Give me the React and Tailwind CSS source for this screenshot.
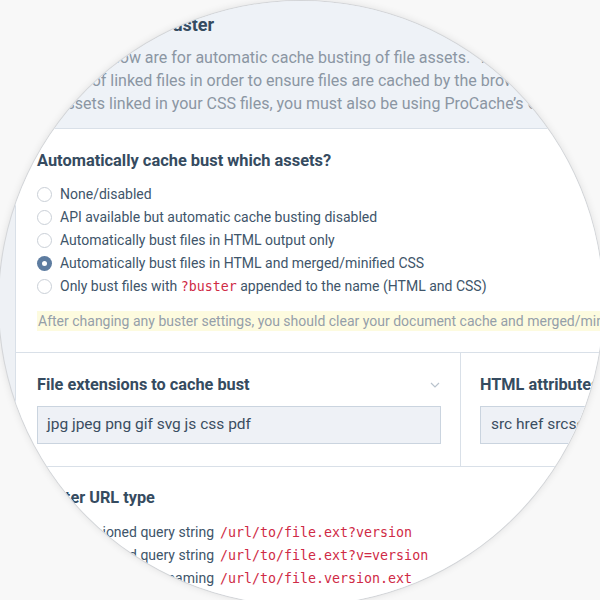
import React from 'react';
import { RefreshCw } from 'lucide-react';

const sans = { fontFamily: 'Roboto, "Noto Sans", sans-serif' };
const mono = { fontFamily: '"DejaVu Sans Mono", "Liberation Mono", monospace' };

function Radio({ checked }) {
  return checked ? (
    <span className="w-[15px] h-[15px] rounded-full bg-[#5d7ca0] flex items-center justify-center shrink-0">
      <span className="w-[5px] h-[5px] rounded-full bg-white" />
    </span>
  ) : (
    <span className="w-[15px] h-[15px] rounded-full border border-[#c9cfd6] bg-white shrink-0" />
  );
}

const assetOptions = [
  { label: 'None/disabled' },
  { label: 'API available but automatic cache busting disabled' },
  { label: 'Automatically bust files in HTML output only' },
  { label: 'Automatically bust files in HTML and merged/minified CSS', checked: true },
  { label: 'only', code: '?buster' },
];

const urlTypes = [
  { label: 'Versioned query string', code: '/url/to/file.ext?version' },
  { label: 'Standard query string', code: '/url/to/file.ext?v=version' },
  { label: 'Versioned file naming', code: '/url/to/file.version.ext' },
];

export default function App() {
  return (
    <div className="w-[600px] h-[600px] overflow-hidden bg-[#f8f8f8]" style={sans}>
      <div className="-ml-[1px] mt-[1px] w-[604px] h-[604px] rounded-full overflow-hidden bg-[#eef1f5] ring-1 ring-[#d3d5d8] shadow-[0_0_8px_rgba(0,0,0,0.12)]">
        {/* description header */}
        <div className="h-[128px] bg-[#eef2f7] border-b border-[#d9e0e8] pl-[37px] pt-[13px]">
          <h2 className="flex items-center gap-[5px] text-[18px] leading-[22px] font-bold text-[#354b60]">
            <RefreshCw size={14} strokeWidth={2.5} />
            Asset Cache Buster
          </h2>
          <p className="mt-[10px] text-[16px] leading-[23px] text-[#8b96a3] whitespace-nowrap">
            Settings below are for automatic cache busting of file assets.&nbsp; They append a version string to URLs
            <br />
            version of linked files in order to ensure files are cached by the browser until they change.
            <br />
            To assets linked in your CSS files, you must also be using ProCache’s CSS merge/minify option.
          </p>
        </div>

        <div className="ml-[16px] bg-white border-l border-[#d9e0e8]">
          {/* assets */}
          <div className="pl-[21px] pt-[22px] pb-[21px] border-b border-[#d9e0e8]">
            <h3 className="text-[16.4px] leading-[20px] font-bold text-[#354b60]">Automatically cache bust which assets?</h3>
            <div className="mt-[12px] flex flex-col">
              {assetOptions.map((o, i) => (
                <div key={i} className="h-[23px] flex items-center gap-[8px] text-[14px] text-[#40556a] whitespace-nowrap">
                  <Radio checked={o.checked} />
                  {o.code ? (
                    <span>
                      Only bust files with <span className="text-[#cf2a45] text-[13.3px]" style={mono}>?buster</span> appended to the name (HTML and CSS)
                    </span>
                  ) : (
                    <span>{o.label}</span>
                  )}
                </div>
              ))}
            </div>
            <div className="mt-[13px] h-[20px] bg-[#fdfbdf] flex items-center whitespace-nowrap text-[14px] text-[#959fa9] pl-[1px]">
              After changing any buster settings, you should clear your document cache and merged/minified files.
            </div>
          </div>

          {/* two columns */}
          <div className="flex border-b border-[#d9e0e8]">
            <div className="w-[445px] shrink-0 border-r border-[#d9e0e8] pl-[21px] pr-[19px] pt-[22px] pb-[22px]">
              <div className="flex items-center justify-between">
                <h3 className="text-[16.3px] leading-[20px] font-bold text-[#354b60]">File extensions to cache bust</h3>
                <svg width="10" height="6" viewBox="0 0 10 6" className="mr-[1px]">
                  <path d="M1 1l4 4 4-4" fill="none" stroke="#b9c3cd" strokeWidth="1.2" />
                </svg>
              </div>
              <div className="mt-[11px] h-[38px] bg-[#eef1f6] border border-[#cad4df] flex items-center pl-[9px] text-[15.5px] text-[#3a4d61] whitespace-nowrap">
                jpg jpeg png gif svg js css pdf
              </div>
            </div>
            <div className="flex-1 pl-[19px] pt-[22px] pb-[22px] pr-[10px]">
              <h3 className="text-[16.3px] leading-[20px] font-bold text-[#354b60] whitespace-nowrap">HTML attributes</h3>
              <div className="mt-[11px] h-[38px] bg-[#eef1f6] border border-[#cad4df] flex items-center pl-[10px] text-[15.5px] text-[#3a4d61] whitespace-nowrap">
                src href srcset
              </div>
            </div>
          </div>

          {/* url type */}
          <div className="pl-[21px] pt-[21px] pb-[30px]">
            <h3 className="text-[16.3px] leading-[20px] font-bold text-[#354b60]">Buster URL type</h3>
            <div className="mt-[13px] flex flex-col">
              {urlTypes.map((u, i) => (
                <div key={i} className="h-[23px] flex items-center text-[14px] text-[#40556a] whitespace-nowrap">
                  <Radio checked={i === 0} />
                  <span className="ml-[8px] w-[154px] text-right">{u.label}</span>
                  <span className="ml-[6px] text-[#cf2a45] text-[13.3px]" style={mono}>{u.code}</span>
                </div>
              ))}
            </div>
          </div>
        </div>
      </div>
    </div>
  );
}
